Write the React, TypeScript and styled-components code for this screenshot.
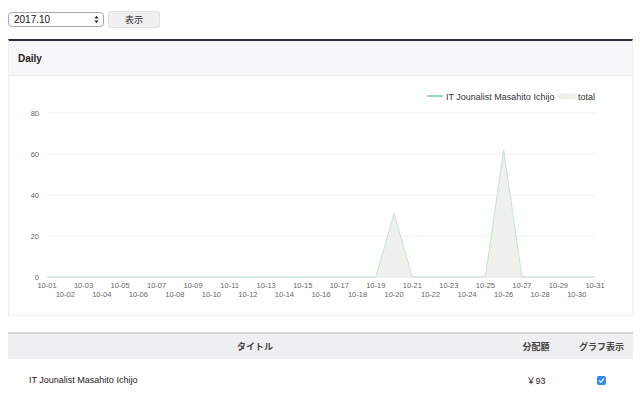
import styled, { createGlobalStyle } from "styled-components";

const GlobalStyle = createGlobalStyle`
  body {
    margin: 0;
    background: #ffffff;
    font-family: "Liberation Sans", Arial, "Noto Sans CJK JP", sans-serif;
    color: #333333;
  }
`;

const Page = styled.div`
  padding: 11px 8px 0 8px;
  width: 625px;
`;

const Toolbar = styled.div`
  display: flex;
  align-items: center;
  gap: 4px;
  height: 17px;
`;

const MonthSelect = styled.div`
  box-sizing: border-box;
  width: 96px;
  height: 15px;
  border: 1px solid #a9a9a9;
  border-radius: 4px;
  background: #ffffff;
  display: flex;
  align-items: center;
  justify-content: space-between;
  padding: 0 4px 0 5px;
  font-size: 10px;
  color: #111111;
  svg {
    display: block;
  }
`;

const ShowButton = styled.button`
  box-sizing: border-box;
  width: 52px;
  height: 17px;
  border: 1px solid #e2e2e2;
  background: #f0f0f0;
  border-radius: 2px;
  font-family: "Noto Sans CJK JP", sans-serif;
  font-size: 9px;
  color: #333;
  padding: 0;
`;

const Panel = styled.div`
  margin-top: 11px;
  border-top: 2px solid #2a2d43;
  border-left: 1px solid #eeeeee;
  border-right: 1px solid #eeeeee;
  border-bottom: 1px solid #eeeeee;
`;

const PanelHeader = styled.div`
  height: 34px;
  background: #f6f7f8;
  border-bottom: 1px solid #ececec;
  display: flex;
  align-items: center;
  padding-left: 9px;
  font-size: 10px;
  font-weight: bold;
  color: #222;
`;

const ChartBody = styled.div`
  height: 239px;
  background: #ffffff;
  svg {
    display: block;
  }
`;

const DataTable = styled.table`
  margin-top: 16px;
  width: 625px;
  border-collapse: collapse;
  font-size: 9px;
  th {
    background: #eeeff1;
    border-top: 2px solid #d7d8da;
    height: 25px;
    font-family: "Noto Sans CJK JP", sans-serif;
    font-weight: bold;
    font-size: 9px;
    color: #444;
    padding: 0;
  }
  td {
    height: 42px;
    padding: 0;
    color: #222;
  }
`;

const TitleCell = styled.td`
  padding-left: 21px !important;
  font-size: 9px;
`;

const CenterCell = styled.td`
  text-align: center;
`;

const Check = styled.span`
  display: inline-block;
  width: 9px;
  height: 9px;
  border-radius: 2px;
  background: #2f88f7;
  position: relative;
  vertical-align: middle;
  svg {
    position: absolute;
    left: 1px;
    top: 1px;
  }
`;

const days = Array.from({ length: 31 }, (_, i) => i + 1);
const values = days.map((d) => (d === 20 ? 31 : d === 26 ? 62 : 0));

const X0 = 38;
const X1 = 586;
const Y0 = 201;
const step = (X1 - X0) / 30;
const yOf = (v: number) => Y0 - (v / 80) * (Y0 - 37);
const xOf = (i: number) => X0 + i * step;

function Chart() {
  const pts = values.map((v, i) => `${xOf(i)},${yOf(v)}`).join(" ");
  const area = `${X0},${Y0} ${pts} ${X1},${Y0}`;
  return (
    <svg width={623} height={239} fontFamily="Liberation Sans, Arial, sans-serif">
      <line x1={418} y1={20} x2={434} y2={20} stroke="#5fd59a" strokeWidth={1.5} />
      <text x={437} y={23.5} fontSize={9} fill="#333">IT Jounalist Masahito Ichijo</text>
      <rect x={550} y={18} width={16} height={5} fill="#eef1ec" stroke="#dfe8de" strokeWidth={0.5} />
      <text x={569} y={23.5} fontSize={9} fill="#333">total</text>
      {[0, 20, 40, 60, 80].map((v) => (
        <g key={v}>
          <line x1={X0} y1={yOf(v)} x2={X1} y2={yOf(v)} stroke={v === 0 ? "#dde5dd" : "#efefef"} strokeWidth={1} />
          <text x={30} y={yOf(v) + 2.5} fontSize={7.5} fill="#666" textAnchor="end">{v}</text>
        </g>
      ))}
      <polygon points={area} fill="rgba(236,240,234,0.9)" stroke="none" />
      <polyline points={pts} fill="none" stroke="#c4e3cf" strokeWidth={1} />
      {days.map((d, i) => (
        <text
          key={d}
          x={xOf(i)}
          y={i % 2 === 0 ? 212 : 221}
          fontSize={7.5}
          fill="#666"
          textAnchor="middle"
        >
          {`10-${String(d).padStart(2, "0")}`}
        </text>
      ))}
    </svg>
  );
}

export default function App() {
  return (
    <Page>
      <GlobalStyle />
      <Toolbar>
        <MonthSelect>
          <span>2017.10</span>
          <svg width={5} height={9} viewBox="0 0 5 9">
            <path d="M0.5 3.5 L2.5 0.8 L4.5 3.5 Z M0.5 5.5 L2.5 8.2 L4.5 5.5 Z" fill="#222" />
          </svg>
        </MonthSelect>
        <ShowButton>表示</ShowButton>
      </Toolbar>
      <Panel>
        <PanelHeader>Daily</PanelHeader>
        <ChartBody>
          <Chart />
        </ChartBody>
      </Panel>
      <DataTable>
        <thead>
          <tr>
            <th style={{ width: 494 }}>タイトル</th>
            <th style={{ width: 68 }}>分配額</th>
            <th>グラフ表示</th>
          </tr>
        </thead>
        <tbody>
          <tr>
            <TitleCell>IT Jounalist Masahito Ichijo</TitleCell>
            <CenterCell>￥93</CenterCell>
            <CenterCell>
              <Check>
                <svg width={7} height={7} viewBox="0 0 7 7">
                  <path d="M1 3.6 L2.8 5.3 L6 1.5" fill="none" stroke="#fff" strokeWidth={1.2} />
                </svg>
              </Check>
            </CenterCell>
          </tr>
        </tbody>
      </DataTable>
    </Page>
  );
}
